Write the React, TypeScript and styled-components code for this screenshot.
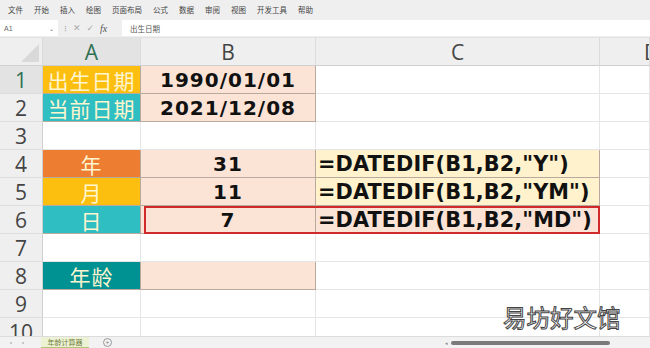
import React from "react";
import styled, { createGlobalStyle } from "styled-components";

const Global = createGlobalStyle`
  html, body { margin: 0; padding: 0; background: #fff; }
  body { font-family: "Noto Sans", "Noto Sans CJK SC", sans-serif; }
`;

const Page = styled.div`
  position: relative;
  width: 650px;
  height: 348px;
  overflow: hidden;
  display: flex;
  flex-direction: column;
  background: #fff;
`;

const MenuBar = styled.div`
  height: 18px;
  background: #efefef;
  display: flex;
  align-items: center;
  gap: 11px;
  padding-left: 8px;
  font-family: "Noto Sans CJK SC", sans-serif;
  font-size: 7.5px;
  color: #444;
`;

const FormulaBar = styled.div`
  height: 19px;
  background: #efefef;
  display: flex;
  align-items: stretch;
  padding: 2px 0 1px 0;
  box-sizing: border-box;
  gap: 2px;
`;

const NameBox = styled.div`
  width: 58px;
  background: #fff;
  display: flex;
  align-items: center;
  justify-content: space-between;
  padding: 0 4px 0 4px;
  box-sizing: border-box;
  font-size: 7px;
  color: #666;
  font-family: "Liberation Sans", sans-serif;
`;

const Chevron = styled.span`
  font-size: 6px;
  color: #666;
`;

const Tools = styled.div`
  width: 56px;
  display: flex;
  align-items: center;
  gap: 6px;
  padding-left: 4px;
  color: #aaa;
  font-size: 9px;
  font-family: "DejaVu Sans", sans-serif;
`;

const Fx = styled.span`
  font-family: "Liberation Serif", serif;
  font-style: italic;
  color: #555;
  font-size: 10px;
`;

const FormulaInput = styled.div`
  flex: 1;
  background: #fff;
  display: flex;
  align-items: center;
  padding-left: 8px;
  font-family: "Noto Sans CJK SC", sans-serif;
  font-size: 7.5px;
  color: #555;
`;

const Sheet = styled.div`
  display: grid;
  grid-template-columns: 43px 98px 175px 284px 1fr;
  grid-template-rows: 28px repeat(10, 28px);
  height: 298px;
  overflow: hidden;
  border-top: 1px solid #e2e2e2;
`;

const Corner = styled.div`
  background: #efefef;
  border-right: 1px solid #d8d8d8;
  border-bottom: 1px solid #d0d0d0;
  position: relative;
  overflow: hidden;
  &::after {
    content: "";
    position: absolute;
    right: 3px;
    bottom: 3px;
    width: 0;
    height: 0;
    border-left: 18px solid transparent;
    border-bottom: 18px solid #d9d9d9;
  }
`;

const ColHead = styled.div<{ $active?: boolean }>`
  background: ${(p) => (p.$active ? "#e3e3e3" : "#efefef")};
  border-right: 1px solid #dcdcdc;
  border-bottom: 1px solid #cfcfcf;
  display: flex;
  align-items: center;
  justify-content: center;
  font-family: "Open Sans", sans-serif;
  font-size: 21px;
  color: ${(p) => (p.$active ? "#2f6f52" : "#444")};
  overflow: hidden;
  white-space: nowrap;
`;

const ColHeadD = styled(ColHead)`
  justify-content: flex-start;
  padding-left: 44px;
`;

const RowHead = styled.div<{ $active?: boolean }>`
  background: ${(p) => (p.$active ? "#e3e3e3" : "#efefef")};
  border-right: 1px solid #d0d0d0;
  border-bottom: 1px solid #dedede;
  display: flex;
  align-items: center;
  justify-content: center;
  font-family: "Open Sans", sans-serif;
  font-size: 21px;
  color: ${(p) => (p.$active ? "#2f6f52" : "#444")};
`;

type CellProps = { $bg?: string; $edge?: boolean; $at?: [number, number] };

const Cell = styled.div<CellProps>`
  ${(p) => (p.$at ? `grid-row: ${p.$at[0]}; grid-column: ${p.$at[1]};` : "")}
  background: ${(p) => p.$bg || "#fff"};
  border-right: 1px solid ${(p) => (p.$edge ? "#b9aaa0" : "#e6e6e6")};
  border-bottom: 1px solid ${(p) => (p.$edge ? "#b9aaa0" : "#e6e6e6")};
  display: flex;
  align-items: center;
  justify-content: center;
  overflow: hidden;
  white-space: nowrap;
`;

const Label = styled(Cell)`
  font-family: "Noto Sans CJK SC", sans-serif;
  font-size: 21px;
  color: #fff5cf;
  letter-spacing: 1px;
`;

const Value = styled(Cell)`
  font-family: "DejaVu Sans", "Verdana", sans-serif;
  font-weight: 700;
  font-size: 20px;
  color: #111;
  letter-spacing: 1px;
`;

const Formula = styled(Cell)`
  justify-content: flex-start;
  padding-left: 2px;
  font-family: "DejaVu Sans", "Verdana", sans-serif;
  font-weight: 700;
  font-size: 20.8px;
  color: #111;
  letter-spacing: 0.1px;
`;

const RedFrame = styled.div<{ $row: number }>`
  grid-column: 3 / 5;
  grid-row: ${(p) => p.$row};
  margin-left: 3px;
  border: 2px solid #d12a2a;
  pointer-events: none;
  z-index: 2;
`;

const TabBar = styled.div`
  flex: 1;
  background: #f2f2f2;
  border-top: 1px solid #dcdcdc;
  display: flex;
  align-items: center;
  font-family: "Noto Sans CJK SC", sans-serif;
  font-size: 7px;
  color: #777;
`;

const Nav = styled.div`
  width: 41px;
  display: flex;
  gap: 10px;
  padding-left: 10px;
  box-sizing: border-box;
`;

const NavDot = styled.div`
  width: 2px;
  height: 2px;
  border-radius: 50%;
  background: #bbb;
`;

const Tab = styled.div`
  height: 100%;
  width: 48px;
  display: flex;
  align-items: center;
  justify-content: center;
  background: #eef2d4;
  border-bottom: 1px solid #b7c27a;
  box-sizing: border-box;
  color: #6f7d3a;
`;

const AddTab = styled.div`
  width: 7px;
  height: 7px;
  border: 1px solid #999;
  border-radius: 50%;
  margin-left: 14px;
  display: flex;
  align-items: center;
  justify-content: center;
  font-size: 6px;
  line-height: 1;
  color: #777;
`;

const Scroll = styled.div`
  margin-left: auto;
  margin-right: 40px;
  width: 165px;
  display: flex;
  align-items: center;
  gap: 3px;
`;

const ScrollArrow = styled.span`
  color: #888;
  font-size: 5px;
`;

const Thumb = styled.div`
  flex: 1;
  height: 4px;
  border-radius: 2px;
  background: #7a7a7a;
`;

const Watermark = styled.div`
  position: absolute;
  left: 503px;
  top: 300px;
  font-family: "Noto Sans CJK SC", sans-serif;
  font-size: 23.5px;
  color: #fff;
  -webkit-text-stroke: 1px #444;
`;

const menus = ["文件", "开始", "插入", "绘图", "页面布局", "公式", "数据", "审阅", "视图", "开发工具", "帮助"];

const ORANGE = "#ed7d31";
const GOLD = "#fdbf0f";
const TEAL = "#2fbfc2";
const DTEAL = "#009292";
const PEACH = "#fbe3d6";
const CREAM = "#fff2cc";

function EmptyRow({ n }: { n: number }) {
  return (
    <>
      <RowHead>{n}</RowHead>
      <Cell />
      <Cell />
      <Cell />
      <Cell />
    </>
  );
}

export default function App() {
  return (
    <Page>
      <Global />
      <MenuBar>
        {menus.map((m) => (
          <span key={m}>{m}</span>
        ))}
      </MenuBar>
      <FormulaBar>
        <NameBox>
          <span>A1</span>
          <Chevron>⌄</Chevron>
        </NameBox>
        <Tools>
          <span>⁝</span>
          <span>✕</span>
          <span>✓</span>
          <Fx>fx</Fx>
        </Tools>
        <FormulaInput>出生日期</FormulaInput>
      </FormulaBar>
      <Sheet>
        <Corner />
        <ColHead $active>A</ColHead>
        <ColHead>B</ColHead>
        <ColHead>C</ColHead>
        <ColHeadD>D</ColHeadD>

        <RowHead $active>1</RowHead>
        <Label $bg={GOLD} $edge>出生日期</Label>
        <Value $bg={PEACH} $edge>1990/01/01</Value>
        <Cell />
        <Cell />

        <RowHead>2</RowHead>
        <Label $bg={TEAL} $edge>当前日期</Label>
        <Value $bg={PEACH} $edge>2021/12/08</Value>
        <Cell />
        <Cell />

        <EmptyRow n={3} />

        <RowHead>4</RowHead>
        <Label $bg={ORANGE} $edge>年</Label>
        <Value $bg={PEACH} $edge>31</Value>
        <Formula $bg={CREAM} $edge>=DATEDIF(B1,B2,"Y")</Formula>
        <Cell />

        <RowHead>5</RowHead>
        <Label $bg={GOLD} $edge>月</Label>
        <Value $bg={PEACH} $edge>11</Value>
        <Formula $bg={CREAM} $edge>=DATEDIF(B1,B2,"YM")</Formula>
        <Cell />

        <RowHead>6</RowHead>
        <Label $bg={TEAL} $edge>日</Label>
        <Value $bg={PEACH} $edge $at={[7, 3]}>7</Value>
        <Formula $bg={PEACH} $edge $at={[7, 4]}>=DATEDIF(B1,B2,"MD")</Formula>
        <RedFrame $row={7} />
        <Cell />

        <EmptyRow n={7} />

        <RowHead>8</RowHead>
        <Label $bg={DTEAL} $edge>年龄</Label>
        <Value $bg={PEACH} $edge />
        <Cell />
        <Cell />

        <EmptyRow n={9} />
        <EmptyRow n={10} />
      </Sheet>
      <TabBar>
        <Nav>
          <NavDot />
          <NavDot />
        </Nav>
        <Tab>年龄计算器</Tab>
        <AddTab>+</AddTab>
        <Scroll>
          <ScrollArrow>◂</ScrollArrow>
          <Thumb />
        </Scroll>
      </TabBar>
      <Watermark>易坊好文馆</Watermark>
    </Page>
  );
}
